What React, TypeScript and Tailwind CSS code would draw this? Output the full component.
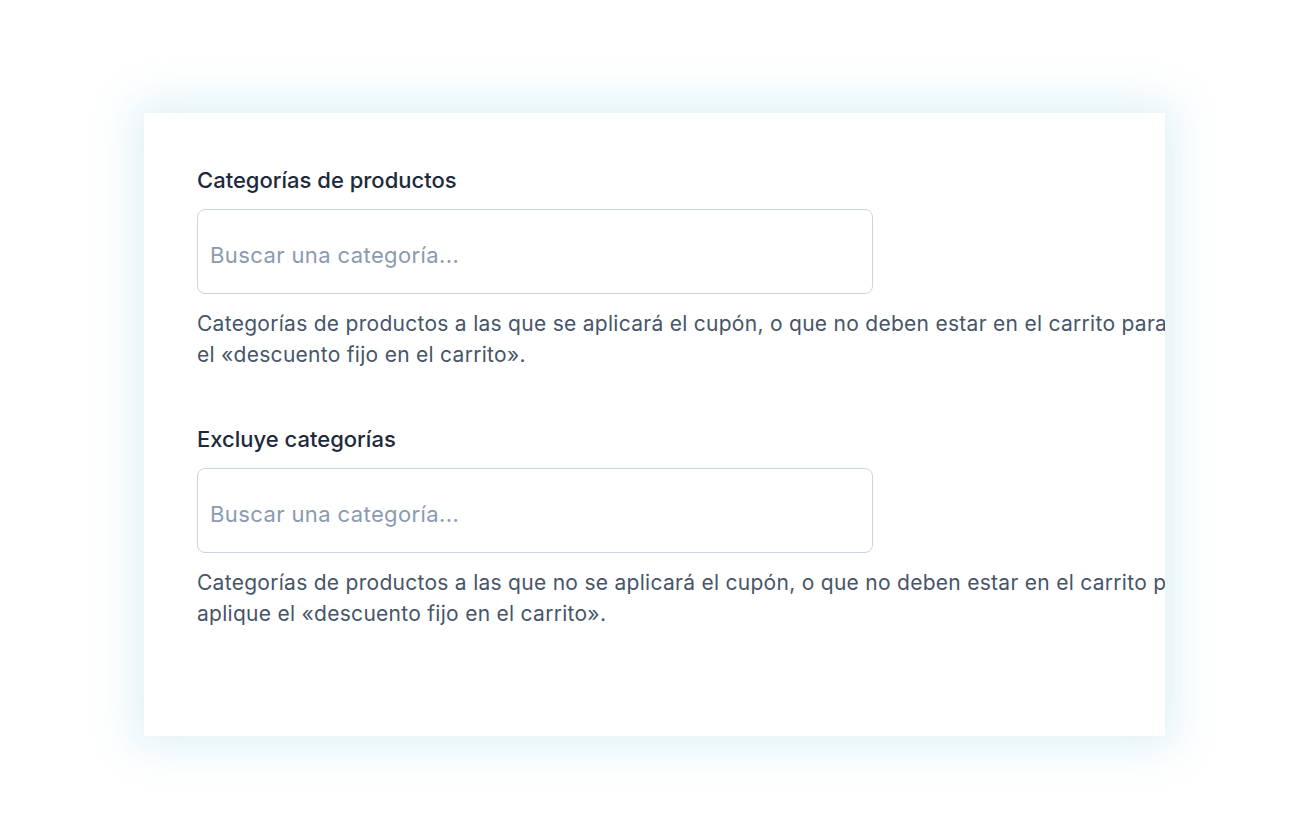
import React from "react";

function Field({ label, line1, line2 }: { label: string; line1: string; line2: string }) {
  return (
    <div className="flex flex-col">
      <div className="text-[22px] leading-[30px] font-medium text-[#1e293b]">{label}</div>
      <div className="mt-[14px] w-[676px] h-[85px] rounded-[8px] border border-[#cbd5e1] flex items-center px-[12px] pt-[8px]">
        <span className="text-[22px] tracking-[0.4px] text-[#8a9bb0]">Buscar una categoría...</span>
      </div>
      <p className="mt-[14px] text-[21px] tracking-[0.28px] leading-[31px] text-[#475569] whitespace-nowrap">
        {line1}
        <br />
        {line2}
      </p>
    </div>
  );
}

export default function App() {
  return (
    <div
      className="w-[1300px] h-[839px] bg-white pt-[113px] pl-[144px]"
      style={{ fontFamily: "Inter, 'Noto Sans', sans-serif" }}
    >
      <div className="w-[1021px] h-[623px] bg-white overflow-hidden shadow-[0_0_40px_10px_rgba(185,225,238,0.45)] pl-[53px] pt-[52px] flex flex-col gap-[54px]">
        <Field
          label="Categorías de productos"
          line1="Categorías de productos a las que se aplicará el cupón, o que no deben estar en el carrito para que se aplique"
          line2="el «descuento fijo en el carrito»."
        />
        <Field
          label="Excluye categorías"
          line1="Categorías de productos a las que no se aplicará el cupón, o que no deben estar en el carrito para que se"
          line2="aplique el «descuento fijo en el carrito»."
        />
      </div>
    </div>
  );
}
